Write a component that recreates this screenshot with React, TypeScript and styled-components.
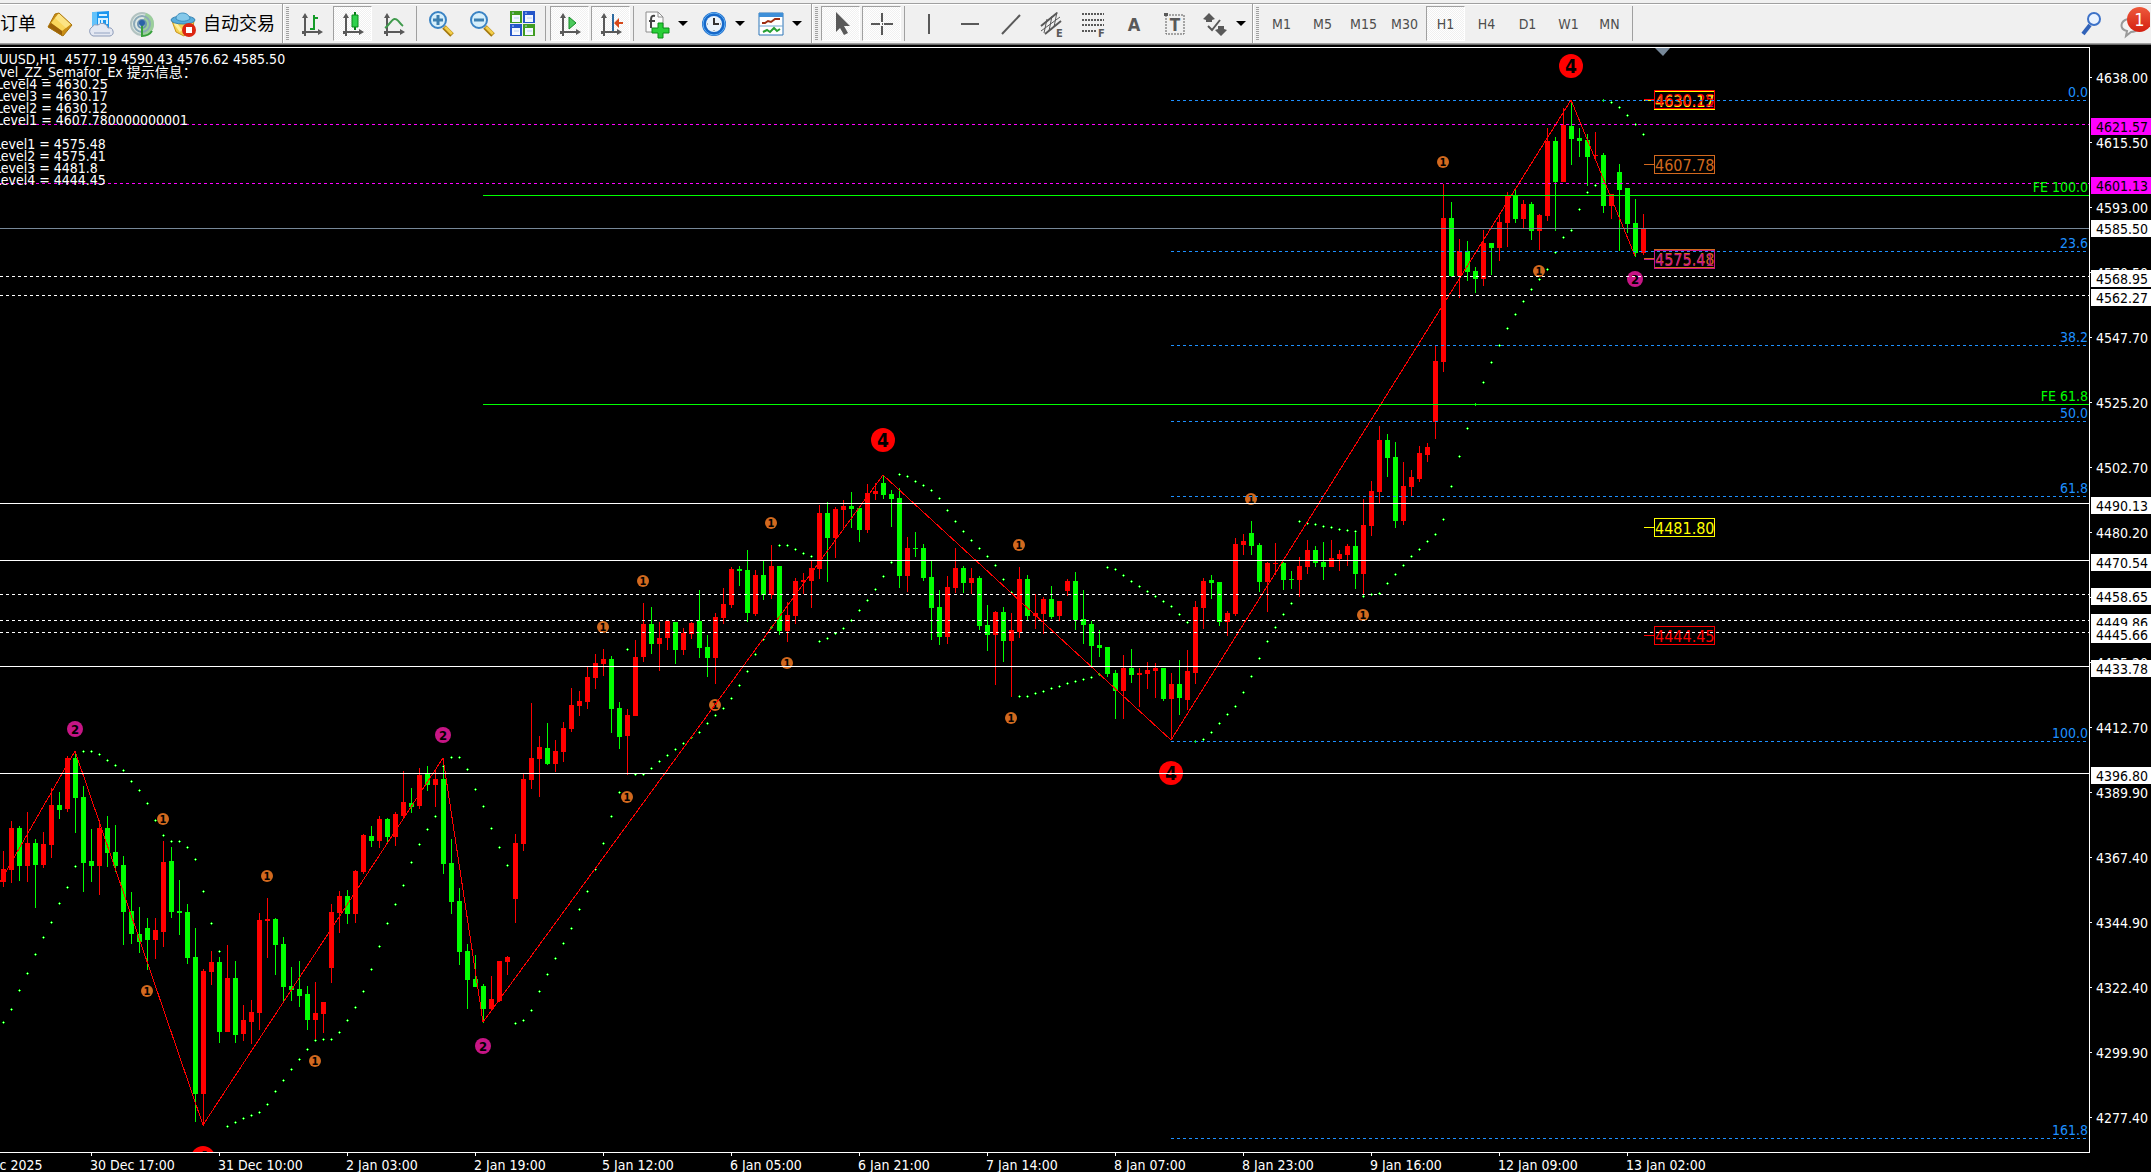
import React from "react";
import styled, { createGlobalStyle, css } from "styled-components";

const TEXT_FONT = `"DejaVu Sans Condensed", "DejaVu Sans", "Noto Sans CJK SC", sans-serif`;

const GlobalStyle = createGlobalStyle`
  * { box-sizing: border-box; }
  body { margin: 0; background: #000; overflow: hidden; }
`;

const Terminal = styled.div`
  display: flex;
  flex-direction: column;
  height: 100vh;
  background: #000;
  font-family: ${TEXT_FONT};
  font-size: 14px;
`;

/* ---------- toolbar ---------- */

const ToolbarStrip = styled.header`
  flex: none;
  height: 45px;
  padding-top: 3px;
  background: #f0f0f0;
  border-bottom: 1px solid #696969;
`;

const Toolbar = styled.div`
  display: flex;
  align-items: center;
  height: 41px;
  border-top: 1px solid #a0a0a0;
  border-bottom: 1px solid #a0a0a0;
  box-shadow: inset 0 1px 0 #fff;
`;

const Group = styled.div<{ $gap?: number }>`
  display: flex;
  align-items: center;
  height: 100%;
  padding-right: ${(p) => p.$gap ?? 0}px;
`;

const Spacer = styled.div`
  flex: 1;
`;

const Divider = styled.span`
  width: 2px;
  height: 35px;
  margin: 0 2px;
  background: linear-gradient(to right, #a0a0a0 50%, #f0f0f0 50%);
`;

const Grip = styled.span`
  display: flex;
  align-items: center;
  width: 9px;
  height: 100%;
  padding-left: 3px;
  border-left: 1px solid #a0a0a0;
  box-shadow: inset 1px 0 0 #fff;

  &::before {
    content: "";
    width: 3px;
    height: 33px;
    background: repeating-linear-gradient(#a0a0a0 0 1px, #f0f0f0 1px 2px);
  }
`;

const ToolButton = styled.button<{ $pressed?: boolean; $wide?: boolean }>`
  display: flex;
  align-items: center;
  justify-content: center;
  flex: none;
  width: ${(p) => (p.$wide ? 57 : 39)}px;
  height: 35px;
  margin: 0 ${(p) => (p.$wide ? 0 : 1)}px;
  padding: 0;
  border: 1px solid transparent;
  background: transparent;
  color: #4d4d4d;
  font: 14px/16px ${TEXT_FONT};
  ${(p) =>
    p.$pressed &&
    css`
      border-color: #a0a0a0 #fff #fff #a0a0a0;
      background: repeating-conic-gradient(#fff 0 25%, #f0f0f0 0 50%) 0 0 / 2px 2px;
    `}

  svg {
    display: block;
    flex: none;
    overflow: visible;
  }
`;

const OrderButton = styled(ToolButton)`
  width: 56px;
  margin: 0 2px 0 -19px;
  justify-content: flex-start;
  color: #000;
  font-size: 18px;
`;

const AutoButton = styled(ToolButton)`
  width: 116px;
  margin: 0 4px 0 0;
  padding-left: 7px;
  gap: 7px;
  justify-content: flex-start;
  color: #000;
  font-size: 18px;
  white-space: nowrap;
`;

const Arrow = styled.span`
  width: 0;
  margin: 0 0 0 8px;
  border: 5px solid transparent;
  border-top-color: #000;
  border-bottom: 0;
`;

const SearchButton = styled(ToolButton)`
  margin-right: 1px;
`;

const ChatButton = styled(ToolButton)`
  position: relative;
  margin-right: 0;
  padding-left: 5px;
  justify-content: flex-start;
  overflow: hidden;
`;

const Badge = styled.span`
  position: absolute;
  top: 0;
  right: -2px;
  width: 25px;
  height: 25px;
  border-radius: 50%;
  background: linear-gradient(#ee5a3c, #d41f10);
  color: #fff;
  font-size: 18px;
  line-height: 25px;
  text-align: center;
`;

/* ---------- chart window ---------- */

const ChartWindow = styled.main`
  display: grid;
  flex: 1;
  min-height: 0;
  grid-template: minmax(0, 1fr) 19px / minmax(0, 1fr) 61px;
  padding-top: 2px;
  background: #000;
`;

const Plot = styled.section`
  position: relative;
  overflow: hidden;
  border: solid #fff;
  border-width: 1px 1px 1px 0;
`;

const Canvas = styled.svg`
  display: block;
  width: 100%;
  height: 100%;
  overflow: hidden;
  font-family: ${TEXT_FONT};
  font-size: 14px;
`;

const PriceCell = styled.aside`
  overflow: hidden;
  padding-top: 1px;
`;

const TimeCell = styled.footer`
  grid-column: 1 / -1;
  overflow: hidden;
`;

const Comment = styled.div`
  position: absolute;
  top: 5px;
  left: 0;
  color: #fff;
  line-height: 12px;
  white-space: pre;
`;

const CommentLine = styled.p<{ $shift: number; $tall?: boolean }>`
  height: ${(p) => (p.$tall ? 13 : 12)}px;
  margin: 0 0 0 -${(p) => p.$shift}px;
`;

/* ---------- data ---------- */

// Pixel rows inside the window: direction, high, body top, body bottom, low, parabolic SAR.
type Candle = [string, number, number, number, number, number];
const CANDLES: Candle[] = [
  ["R",851,869,882,887,1022],["R",821,828,870,883,1009],["G",826,828,866,881,990],["R",812,843,866,882,973],
  ["G",839,843,865,908,954],["R",832,844,865,868,937],["R",788,805,845,858,922],["G",792,805,810,819,903],
  ["R",756,758,809,812,887],["G",753,758,798,833,866],["G",786,797,863,892,751],["G",829,861,866,882,751],
  ["R",820,828,866,895,754],["G",816,828,853,867,760],["G",825,852,866,872,765],["G",856,865,912,945,770],
  ["G",892,911,934,944,781],["G",907,934,942,953,790],["G",918,928,940,970,803],["R",918,930,940,959,820],
  ["R",841,862,932,947,835],["G",847,861,912,918,841],["G",880,911,913,935,841],["G",904,912,958,964,847],
  ["G",928,957,1094,1122,859],["R",969,971,1094,1126,891],["R",951,962,972,985,923],["G",957,962,1032,1043,951],
  ["R",945,978,1032,1032,1126],["G",961,978,1035,1043,1122],["R",1005,1020,1034,1041,1118],["R",1000,1012,1022,1044,1115],
  ["R",913,920,1013,1030,1112],["R",898,919,921,958,1104],["G",918,919,945,975,1091],["G",937,944,987,1003,1080],
  ["G",967,986,990,1001,1069],["G",961,989,996,1007,1059],["G",986,994,1020,1030,1049],["R",982,1013,1020,1040,1040],
  ["R",1002,1002,1014,1033,1039],["R",904,912,968,983,1039],["R",891,896,913,933,1032],["G",890,896,914,924,1020],
  ["R",870,871,914,923,1007],["R",834,835,872,874,991],["G",826,836,841,847,969],["R",816,819,841,848,946],
  ["G",818,819,837,842,923],["R",812,814,837,846,904],["R",771,802,816,819,885],["G",788,803,807,813,862],
  ["R",768,775,806,809,844],["G",766,774,785,791,829],["R",769,779,785,807,816],["G",758,779,864,874,766],
  ["G",839,863,902,914,757],["G",888,901,952,965,757],["G",944,951,980,1009,769],["G",955,979,987,987,789],
  ["G",984,986,1009,1023,806],["R",976,999,1009,1009,828],["R",961,961,1001,1002,847],["R",956,957,962,975,865],
  ["R",834,843,899,923,1023],["R",774,779,844,851,1020],["R",703,758,780,789,1010],["R",736,747,759,797,991],
  ["G",723,748,764,765,974],["R",740,751,764,772,958],["R",722,728,752,762,943],["R",688,705,729,732,928],
  ["R",691,701,706,716,909],["R",667,677,702,709,891],["R",654,663,678,689,869],["R",649,659,664,676,843],
  ["G",656,659,709,733,816],["G",702,708,737,749,792],["R",709,715,736,775,649],["R",640,657,716,716,774],
  ["R",603,624,657,662,774],["G",607,624,644,654,768],["R",622,638,644,671,761],["R",621,621,638,650,755],
  ["G",622,622,650,664,749],["R",628,633,650,655,743],["R",622,623,634,639,737],["G",590,621,648,658,732],
  ["G",635,647,658,677,723],["R",613,617,658,684,715],["R",588,604,618,624,708],["R",567,569,605,608,698],
  ["G",566,569,571,586,685],["G",550,570,613,622,671],["R",570,575,614,616,654],["G",561,575,595,600,639],
  ["R",545,566,595,599,627],["G",566,566,631,635,545],["R",602,615,631,642,545],["R",578,581,616,624,549],
  ["R",573,580,582,594,553],["R",561,568,581,608,556],["R",505,513,569,579,641],["G",502,513,538,582,638],
  ["R",507,509,538,558,633],["R",500,506,510,530,628],["G",492,506,509,528,620],["G",506,508,530,542,610],
  ["R",484,493,530,533,600],["R",483,491,494,500,589],["G",475,483,495,499,576],["G",490,494,499,527,562],
  ["G",488,498,576,588,474],["R",537,548,576,592,476],["G",532,548,549,557,481],["G",544,548,578,581,485],
  ["G",561,577,608,640,490],["G",590,607,637,645,498],["R",576,587,637,644,510],["R",548,568,588,593,521],
  ["G",566,568,583,593,531],["R",568,578,583,594,540],["G",576,578,626,630,548],["G",605,625,635,651,556],
  ["R",611,612,635,685,565],["G",607,612,641,662,579],["R",613,630,641,697,592],["R",567,579,632,638,696],
  ["G",575,579,616,620,696],["R",594,613,616,629,693],["R",597,599,614,634,691],["G",586,599,617,619,688],
  ["R",601,601,616,621,686],["R",579,581,591,596,683],["G",572,581,620,630,681],["G",590,619,625,644,679],
  ["G",621,624,646,667,677],["G",630,645,648,657,674],["G",647,647,674,677,567],["G",670,673,691,719,569],
  ["R",655,668,691,719,575],["G",649,668,675,683,581],["R",668,673,675,707,586],["R",662,670,674,689,591],
  ["R",663,668,671,698,596],["G",668,668,699,701,601],["R",673,684,699,740,606],["G",660,684,698,715,614],
  ["R",650,671,700,710,622],["R",601,607,673,684,741],["R",578,581,608,629,739],["G",575,580,583,599,732],
  ["G",582,582,622,626,723],["R",611,613,622,636,714],["R",538,544,614,616,706],["R",534,541,545,555,692],
  ["G",521,533,546,555,676],["G",543,545,582,592,658],["R",562,563,582,612,641],["R",543,563,564,575,627],
  ["G",562,563,580,590,614],["G",571,579,580,589,603],["R",557,566,580,597,521],["R",540,550,567,574,523],
  ["G",546,550,563,567,524],["G",542,562,567,580,526],["R",540,558,567,567,527],["R",550,554,559,571,529],
  ["R",544,546,555,566,530],["G",531,546,574,589,531],["R",499,525,574,595,596],["R",481,491,526,536,594],
  ["R",426,440,492,503,593],["G",434,440,458,477,583],["G",442,457,521,528,574],["R",462,486,521,525,565],
  ["R",470,477,487,496,556],["R",446,453,479,482,549],["R",443,447,455,462,541],["R",346,361,422,439,534],
  ["R",184,218,362,372,519],["G",202,218,276,277,486],["R",239,251,276,298,456],["G",241,251,272,281,428],
  ["G",267,271,279,293,404],["R",230,243,279,286,382],["G",243,243,248,275,362],["R",215,222,248,261,345],
  ["R",192,196,223,247,328],["G",189,195,219,223,314],["R",200,204,219,228,301],["G",202,204,231,240,289],
  ["R",214,215,231,250,279],["R",128,141,216,221,269],["G",137,141,182,231,252],["R",108,125,182,182,237],
  ["G",101,126,139,165,230],["G",128,138,141,157,209],["G",134,140,157,186,192],["R",132,155,156,161,185],
  ["G",153,155,206,213,100],["R",194,194,206,219,102],["G",164,172,190,251,107],["G",188,188,224,233,115],
  ["G",199,223,253,257,124],["R",214,228,253,255,134],
];

const ZIGZAG = "0,882 75,751 203,1125 443,758 483,1022 883,475 1171,740 1571,100 1635,256";

const SEMAFORS: Array<[number, number, number]> = [
  [1,163,819],[1,147,991],[1,267,876],[1,315,1061],[1,603,627],[1,643,581],[1,715,705],[1,627,797],
  [1,771,523],[1,787,663],[1,1019,545],[1,1011,718],[1,1251,499],[1,1363,615],[1,1443,162],[1,1539,271],
  [2,75,729],[2,443,735],[2,483,1046],[2,1635,279],
  [4,883,440],[4,1171,773],[4,1571,66],[4,203,1158],
];
const SEMAFOR_STYLE: Record<number, { r: number; fill: string; size: number; weight: number }> = {
  1: { r: 6, fill: "#d2691e", size: 11, weight: 700 },
  2: { r: 8, fill: "#c71585", size: 13, weight: 700 },
  4: { r: 12, fill: "#ff0000", size: 19, weight: 700 },
};

const LEVELS: Array<{ y: number; color: string; from?: number; dashed?: boolean; label?: string }> = [
  { y: 228, color: "#778899" },
  { y: 503, color: "#fff" }, { y: 560, color: "#fff" }, { y: 666, color: "#fff" }, { y: 773, color: "#fff" },
  { y: 276, color: "#fff", dashed: true }, { y: 295, color: "#fff", dashed: true },
  { y: 594, color: "#fff", dashed: true }, { y: 620, color: "#fff", dashed: true }, { y: 632, color: "#fff", dashed: true },
  { y: 124, color: "#f0f", dashed: true }, { y: 183, color: "#f0f", dashed: true },
  { y: 195, color: "#0f0", from: 483, label: "FE 100.0" }, { y: 404, color: "#0f0", from: 483, label: "FE 61.8" },
  { y: 100, color: "#1e90ff", from: 1171, dashed: true, label: "0.0" },
  { y: 251, color: "#1e90ff", from: 1171, dashed: true, label: "23.6" },
  { y: 345, color: "#1e90ff", from: 1171, dashed: true, label: "38.2" },
  { y: 421, color: "#1e90ff", from: 1171, dashed: true, label: "50.0" },
  { y: 496, color: "#1e90ff", from: 1171, dashed: true, label: "61.8" },
  { y: 741, color: "#1e90ff", from: 1171, dashed: true, label: "100.0" },
  { y: 1138, color: "#1e90ff", from: 1171, dashed: true, label: "161.8" },
];

const PRICE_TAGS: Array<[string, number, string]> = [
  ["4630.12", 100, "#c71585"], ["4630.17", 100, "#ffff00"], ["4630.25", 99, "#ff0000"],
  ["4607.78", 164, "#d2691e"],
  ["4575.48", 258, "#d2691e"], ["4575.41", 259, "#c71585"],
  ["4481.80", 527, "#ffff00"], ["4444.45", 635, "#ff0000"],
];

const PRICE_TICKS = ["4638.00","4615.50","4593.00","4570.50","4547.70","4525.20","4502.70","4480.20","4457.70",
  "4435.20","4412.70","4389.90","4367.40","4344.90","4322.40","4299.90","4277.40"];

const PRICE_BOXES: Array<[string, number, string]> = [
  ["4621.57",118,"#f0f"],["4601.13",177,"#f0f"],["4585.50",220,"#fff"],["4568.95",270,"#fff"],["4562.27",289,"#fff"],
  ["4490.13",497,"#fff"],["4470.54",554,"#fff"],["4458.65",588,"#fff"],["4449.86",614,"#fff"],["4445.66",626,"#fff"],
  ["4433.78",660,"#fff"],["4396.80",767,"#fff"],
];

const TIMES = ["29 Dec 2025","30 Dec 17:00","31 Dec 10:00","2 Jan 03:00","2 Jan 19:00","5 Jan 12:00","6 Jan 05:00",
  "6 Jan 21:00","7 Jan 14:00","8 Jan 07:00","8 Jan 23:00","9 Jan 16:00","12 Jan 09:00","13 Jan 02:00"];

const barX = (i: number) => 3 + i * 8;
const TOP = 48;

/* ---------- icons ---------- */

const Icon = ({ children }: { children: React.ReactNode }) => (
  <svg width="26" height="26" viewBox="0 0 26 26" fill="none" aria-hidden="true">{children}</svg>
);
const GREY = "#595959";

const Axes = () => (
  <>
    <path d="M6 5v20M3 21h18" stroke={GREY} strokeWidth="2" />
    <path d="M6 2l3 5H3zM24 21l-5 3v-6zM3 20h2v3H3z" fill={GREY} />
  </>
);

const MarketIcon = () => (
  <Icon>
    <path d="M12 2l13 12-9 11L1 16 8 3z" fill="#c98e15" />
    <path d="M12 2L24 13l-9 7L4 12z" fill="#f9d65c" />
    <path d="M12 2L24 13l-5 4L8 7z" fill="#fff0a5" opacity=".55" />
    <path d="M1 16l3-4 11 8v5z" fill="#9b6109" />
    <path d="M12 2l13 12-9 11L1 16 8 3z" stroke="#a8730b" />
  </Icon>
);
const CloudIcon = () => (
  <Icon>
    <path d="M6 1l15-1v17H6z" fill="#1b96ee" />
    <path d="M4 1h5v16H4z" fill="#63c2fa" />
    <path d="M11 4h8M11 8h3v5h-3zM15 8h4v5" stroke="#d8f1ff" strokeWidth="2" />
    <path d="M5 25a5 5 0 01-1-9 5 5 0 016-2 6 6 0 0110 3 4 4 0 012 8z" fill="#e4e8f2" stroke="#8b9ab8" />
    <path d="M6 22h16" stroke="#bcc6da" strokeWidth="2" />
  </Icon>
);
const SignalIcon = () => (
  <Icon>
    <circle cx="13" cy="13" r="11" fill="#dfe9e4" stroke="#b2c3c1" strokeWidth="2" />
    <path d="M13 13v12a12 12 0 0012-12 12 12 0 00-8-11z" fill="#9bcf9b" />
    <circle cx="13" cy="13" r="8" stroke="#8ba9b8" strokeWidth="2" />
    <circle cx="13" cy="13" r="4" stroke="#6c93b2" strokeWidth="2" />
    <path d="M13 13v12c5 0 8-2 10-5" stroke="#37a03c" strokeWidth="2" />
    <circle cx="13" cy="12" r="3" fill="#2b62a8" />
  </Icon>
);
const AutoIcon = () => (
  <Icon>
    <path d="M2 10l4 11 8 4 9-8 1-8z" fill="#f4d04e" stroke="#c9951c" />
    <path d="M5 12l6 8" stroke="#fff0a0" strokeWidth="3" />
    <ellipse cx="13" cy="9" rx="12" ry="4" fill="#57acdb" stroke="#3582b2" />
    <path d="M6 8c0-8 13-8 14 0-4 3-10 3-14 0z" fill="#85c9ea" stroke="#3c8dbc" />
    <circle cx="19" cy="19" r="7" fill="#dc2612" />
    <path d="M16 16h6v6h-6z" fill="#fff" />
  </Icon>
);
const BarsIcon = () => (
  <Icon><Axes /><path d="M15 4v15M11 18h4M15 7h4" stroke="#149b28" strokeWidth="2" /></Icon>
);
const CandlesIcon = () => (
  <Icon><Axes /><path d="M15 1v18" stroke="#087d18" strokeWidth="2" /><path d="M12 4h6v12h-6z" fill="#2fd14b" stroke="#0a8a1c" /></Icon>
);
const LineIcon = () => (
  <Icon><Axes /><path d="M4 17c5-3 7-10 10-9 3 0 5 5 8 7" stroke="#3f9a4c" strokeWidth="2" /></Icon>
);
const Zoom = ({ plus }: { plus?: boolean }) => (
  <Icon>
    <path d="M16 16l8 8" stroke="#a4780d" strokeWidth="5" />
    <path d="M17 16l7 7" stroke="#f3ce4c" strokeWidth="3" />
    <circle cx="10" cy="9" r="8" fill="#d6effb" stroke="#3a83c4" strokeWidth="2" />
    <path d={plus ? "M5 9h10M10 4v10" : "M5 9h10"} stroke="#3d7fb0" strokeWidth="3" />
  </Icon>
);
const TilesIcon = () => (
  <Icon>
    {[[0, 0, "#3f9c22"], [13, 0, "#2456c9"], [0, 13, "#2456c9"], [13, 13, "#3f9c22"]].map(([x, y, c]) => (
      <g key={`${x}-${y}`} transform={`translate(${x} ${y})`}>
        <path d="M0 0h12v12H0z" fill={c as string} />
        <path d="M2 4h8v7H2z" fill="#f4f8ff" />
        <path d="M2 2h2M4 7h5" stroke="#b9d0f5" />
      </g>
    ))}
  </Icon>
);
const ScrollIcon = () => (
  <Icon><Axes /><path d="M12 6l7 6-7 6z" fill="#4cc95c" stroke="#138a24" /></Icon>
);
const ShiftIcon = () => (
  <Icon><Axes /><path d="M15 3v17" stroke="#2c6aa0" strokeWidth="2" /><path d="M16 12l5-5v4h4v2h-4v4z" fill="#d5481b" /></Icon>
);
const IndicatorIcon = () => (
  <Icon>
    <path d="M2 1h12l5 5v15H2z" fill="#fbfbfb" stroke="#8e8e8e" />
    <path d="M14 1v5h5" stroke="#8e8e8e" />
    <path d="M11 5c-4-1-4 2-4 5v7M5 10h6" stroke="#444" strokeWidth="2" />
    <path d="M14 12h5v5h6v5h-6v5h-5v-5H8v-5h6z" fill="#29cf38" stroke="#0a8e17" />
  </Icon>
);
const ClockIcon = () => (
  <Icon>
    <circle cx="13" cy="13" r="12" fill="#1668c9" />
    <circle cx="13" cy="13" r="11" stroke="#63b2f5" />
    <circle cx="13" cy="13" r="8" fill="#eaf3fb" />
    <path d="M13 7v6h5" stroke="#333" strokeWidth="2" />
    <path d="M6 13h1M19 13h1M13 19v1" stroke="#777" />
  </Icon>
);
const TemplateIcon = () => (
  <Icon>
    <path d="M1 2h24v22H1z" fill="#fff" stroke="#2e76b8" />
    <path d="M1 2h24v4H1z" fill="#3e8fd8" />
    <path d="M1 15h24" stroke="#6fa5d2" />
    <path d="M4 12h3l3-2 3 1 4-3h5" stroke="#9c2d12" strokeWidth="2" />
    <path d="M5 21l4-2 3 2 4-4 3 3 3-2" stroke="#26a033" strokeWidth="2" />
  </Icon>
);
const CursorIcon = () => (
  <Icon><path d="M8 1v20l4-4 4 7 4-2-4-7h6z" fill={GREY} /></Icon>
);
const CrossIcon = () => (
  <Icon><path d="M13 2v9M13 15v9M2 13h9M15 13h9M13 13h1" stroke={GREY} strokeWidth="2" /></Icon>
);
const PathIcon = ({ d }: { d: string }) => (
  <Icon><path d={d} stroke={GREY} strokeWidth="2" /></Icon>
);
const ChannelIcon = () => (
  <Icon>
    <path d="M2 15L18 2M2 20L21 6M6 23L22 10M8 8l-3 14M13 5l-3 15M18 1l-3 15" stroke={GREY} strokeWidth="1" />
    <path d="M2 15L18 2M6 23L22 10" stroke={GREY} strokeWidth="2" />
    <text x="17" y="26" fontSize="11" fontWeight="700" fill={GREY}>E</text>
  </Icon>
);
const FiboIcon = () => (
  <Icon>
    <path d="M2 3h22M2 9h22M2 14h22M2 20h14" stroke={GREY} strokeWidth="2" strokeDasharray="2 1" />
    <text x="18" y="26" fontSize="11" fontWeight="700" fill={GREY}>F</text>
  </Icon>
);
const TextIcon = () => (
  <Icon><text x="13" y="20" textAnchor="middle" fontSize="18" fontWeight="700" fill={GREY}>A</text></Icon>
);
const LabelIcon = () => (
  <Icon>
    <path d="M4 4h18v19H4z" stroke={GREY} strokeDasharray="2 1" />
    <path d="M2 2h4v3H2z" fill={GREY} />
    <text x="13" y="20" textAnchor="middle" fontSize="17" fontWeight="700" fill={GREY}>T</text>
  </Icon>
);
const ArrowsIcon = () => (
  <Icon>
    <path d="M7 2l6 6-3 1v2H4V9L1 8zM19 25l-6-6 3-1v-3h6v3l3 1z" fill={GREY} />
    <path d="M6 15l4 4 8-10" stroke={GREY} strokeWidth="2" />
  </Icon>
);
const SearchIcon = () => (
  <Icon>
    <path d="M12 14l-7 9" stroke="#3062b8" strokeWidth="4" />
    <circle cx="16" cy="8" r="6" fill="#eaf3ff" stroke="#3d72c8" strokeWidth="2" />
  </Icon>
);
const ChatIcon = () => (
  <Icon>
    <path d="M10 8c10-2 16 12 3 13l-5 4 1-5c-8-2-7-10 1-12z" fill="#f3f3f3" stroke="#9a9a9a" strokeWidth="2" />
  </Icon>
);

/* ---------- parts ---------- */

type Tool = { name: string; icon: React.ReactNode; pressed?: boolean };

const Tools = ({ items }: { items: Tool[] }) => (
  <>
    {items.map((t) => (
      <ToolButton key={t.name} aria-label={t.name} $pressed={t.pressed}>{t.icon}</ToolButton>
    ))}
  </>
);

const MenuTool = ({ name, icon }: { name: string; icon: React.ReactNode }) => (
  <ToolButton $wide aria-label={name}>{icon}<Arrow /></ToolButton>
);

const MainToolbar = () => (
  <ToolbarStrip>
    <Toolbar role="toolbar">
      <Group>
        <OrderButton>新订单</OrderButton>
        <Tools items={[
          { name: "Market", icon: <MarketIcon /> },
          { name: "Cloud", icon: <CloudIcon /> },
          { name: "Signals", icon: <SignalIcon /> },
        ]} />
        <AutoButton><AutoIcon />自动交易</AutoButton>
      </Group>
      <Grip />
      <Group $gap={3}>
        <Tools items={[
          { name: "Bar chart", icon: <BarsIcon /> },
          { name: "Candlesticks", icon: <CandlesIcon />, pressed: true },
          { name: "Line chart", icon: <LineIcon /> },
        ]} />
        <Divider />
        <Tools items={[
          { name: "Zoom in", icon: <Zoom plus /> },
          { name: "Zoom out", icon: <Zoom /> },
          { name: "Tile windows", icon: <TilesIcon /> },
        ]} />
        <Divider />
        <Tools items={[
          { name: "Auto scroll", icon: <ScrollIcon />, pressed: true },
          { name: "Chart shift", icon: <ShiftIcon />, pressed: true },
        ]} />
        <Divider />
        <MenuTool name="Indicators" icon={<IndicatorIcon />} />
        <MenuTool name="Periods" icon={<ClockIcon />} />
        <MenuTool name="Templates" icon={<TemplateIcon />} />
      </Group>
      <Grip />
      <Group>
        <Tools items={[
          { name: "Cursor", icon: <CursorIcon />, pressed: true },
          { name: "Crosshair", icon: <CrossIcon />, pressed: true },
        ]} />
        <Divider />
        <Tools items={[
          { name: "Vertical line", icon: <PathIcon d="M13 3v20" /> },
          { name: "Horizontal line", icon: <PathIcon d="M4 13h18" /> },
          { name: "Trend line", icon: <PathIcon d="M4 23L22 4" /> },
          { name: "Channel", icon: <ChannelIcon /> },
          { name: "Fibonacci", icon: <FiboIcon /> },
          { name: "Text", icon: <TextIcon /> },
          { name: "Text label", icon: <LabelIcon /> },
        ]} />
        <MenuTool name="Arrows" icon={<ArrowsIcon />} />
      </Group>
      <Grip />
      <Group>
        {["M1", "M5", "M15", "M30", "H1", "H4", "D1", "W1", "MN"].map((p) => (
          <ToolButton key={p} $pressed={p === "H1"}>{p}</ToolButton>
        ))}
        <Divider />
      </Group>
      <Spacer />
      <SearchButton aria-label="Search"><SearchIcon /></SearchButton>
      <ChatButton aria-label="Messages"><ChatIcon /><Badge>1</Badge></ChatButton>
    </Toolbar>
  </ToolbarStrip>
);

const Candles = () => (
  <g shapeRendering="crispEdges">
    {CANDLES.map(([dir, high, top, bottom, low], i) => (
      <g key={i} fill={dir === "R" ? "#f00" : "#0f0"}>
        <rect x={barX(i)} y={high} width="1" height={low - high} />
        <rect x={barX(i) - 2} y={top} width="5" height={bottom - top} />
      </g>
    ))}
  </g>
);

const SarDots = () => (
  <g shapeRendering="crispEdges">
    <path fill="#0f0" d={CANDLES.map((c, i) => `M${barX(i) - 1} ${c[5]}h3v1h-3zM${barX(i)} ${c[5] - 1}h1v3h-1z`).join("")} />
    <path fill="#c8ffc8" d={CANDLES.map((c, i) => `M${barX(i)} ${c[5]}h1v1h-1z`).join("")} />
  </g>
);

const Semafors = () => (
  <>
    {SEMAFORS.map(([n, x, y]) => {
      const s = SEMAFOR_STYLE[n];
      return (
        <g key={`${x}-${y}`}>
          <circle cx={x} cy={y} r={s.r} fill={s.fill} />
          <text x={x} y={y + Math.round(s.size * 0.36)} textAnchor="middle" fontSize={s.size} fontWeight={s.weight} fill="#000">{n}</text>
        </g>
      );
    })}
  </>
);

const PriceTags = () => (
  <g fontSize="16">
    {PRICE_TAGS.map(([text, y, color]) => (
      <g key={text}>
        <path d={`M1654 ${y - 9}h61v19h-61zM1655 ${y - 8}v17h59v-17z`} fill={color} fillRule="evenodd" shapeRendering="crispEdges" />
        <rect x="1644" y={y} width="10" height="1" fill={color} />
        <text x="1655" y={y + 7} fill={color}>{text}</text>
      </g>
    ))}
  </g>
);

const Levels = () => (
  <>
    {LEVELS.map(({ y, color, from = 0, dashed, label }) => (
      <g key={y}>
        <g transform="translate(0 0.5)">
          <line x1={from} x2="100%" y1={y} y2={y} stroke={color} strokeDasharray={dashed ? "3 3" : undefined} shapeRendering="crispEdges" />
        </g>
        {label && (
          <g transform="translate(-1 0)">
            <text x="100%" y={y - 3} textAnchor="end" fill={color}>{label}</text>
          </g>
        )}
      </g>
    ))}
  </>
);

const PriceScale = () => (
  <PriceCell>
    <Canvas>
      <g transform={`translate(0 ${-TOP})`}>
        {PRICE_TICKS.map((t, i) => (
          <g key={t} fill="#fff">
            <rect x="0" y={77 + i * 65} width="2" height="1" />
            <text x="6" y={83 + i * 65}>{t}</text>
          </g>
        ))}
        {PRICE_BOXES.map(([t, y, bg]) => (
          <g key={t}>
            <rect x="1" y={y} width="60" height="17" fill={bg} />
            <text x="6" y={y + 14} fill="#000">{t}</text>
          </g>
        ))}
      </g>
    </Canvas>
  </PriceCell>
);

const TimeScale = () => (
  <TimeCell>
    <Canvas>
      {TIMES.map((t, i) => (
        <g key={t} fill="#fff">
          <rect x={i * 128 - 37} y="0" width="1" height="3" />
          <text x={i * 128 - 38} y="17">{t}</text>
        </g>
      ))}
    </Canvas>
  </TimeCell>
);

const COMMENTS: Array<[string, number]> = [
  ["Level_ZZ_Semafor_Ex 提示信息：", 15],
  ["Level4 = 4630.25", 4],
  ["Level3 = 4630.17", 4],
  ["Level2 = 4630.12", 4],
  ["Level1 = 4607.780000000001", 4],
  ["", 0],
  ["Level1 = 4575.48", 6],
  ["Level2 = 4575.41", 6],
  ["Level3 = 4481.8", 6],
  ["Level4 = 4444.45", 6],
];

export default function App() {
  return (
    <Terminal>
      <GlobalStyle />
      <MainToolbar />
      <ChartWindow>
        <Plot>
          <Canvas role="img" aria-label="XAUUSD H1">
            <g transform={`translate(0 ${-TOP})`}>
              <path d="M1655 48h15l-7 8z" fill="#778899" />
              <Candles />
              <SarDots />
              <Semafors />
              <polyline points={ZIGZAG} fill="none" stroke="#f00" shapeRendering="crispEdges" />
              <PriceTags />
              <Levels />
            </g>
          </Canvas>
          <Comment>
            <CommentLine $shift={18} $tall>{"XAUUSD,H1  4577.19 4590.43 4576.62 4585.50"}</CommentLine>
            {COMMENTS.map(([text, shift], i) => (
              <CommentLine key={i} $shift={shift}>{text}</CommentLine>
            ))}
          </Comment>
        </Plot>
        <PriceScale />
        <TimeScale />
      </ChartWindow>
    </Terminal>
  );
}
